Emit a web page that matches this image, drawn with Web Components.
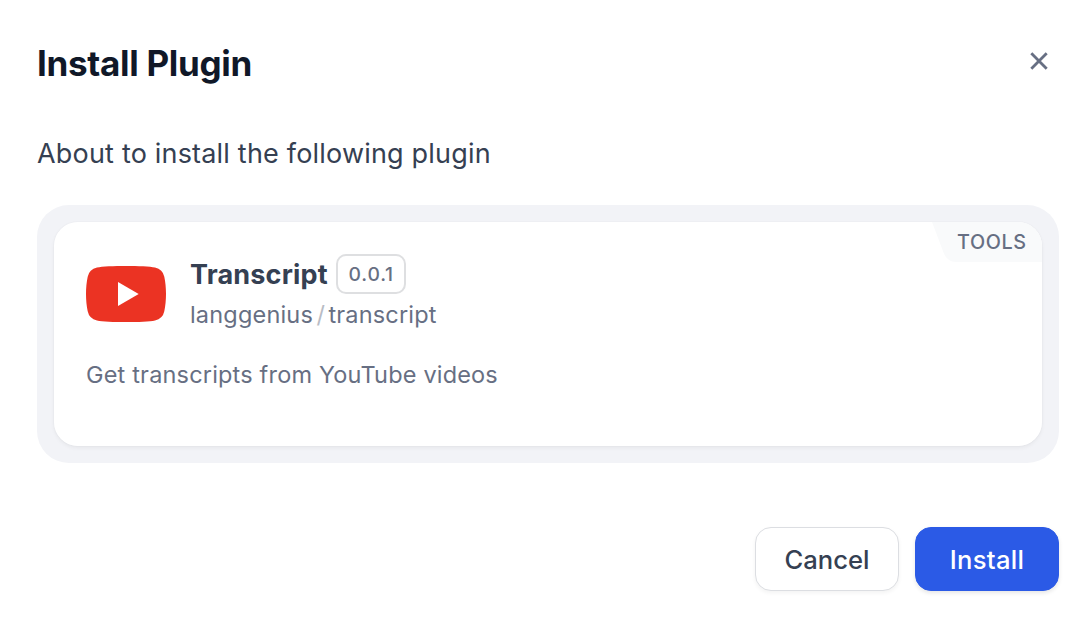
<!DOCTYPE html>
<html lang="en">
<head>
<meta charset="utf-8">
<title>Install Plugin</title>
<style>
html,body{margin:0;height:100%;background:#fff;overflow:hidden}
body{font-family:Inter,"Liberation Sans",sans-serif;color:#354052}
</style>
</head>
<body>
<install-dialog>
  <span slot="title">Install Plugin</span>
  <span slot="message">About to install the following plugin</span>
  <plugin-card>
    <span slot="category">TOOLS</span>
    <youtube-logo slot="icon"></youtube-logo>
    <span slot="name">Transcript</span>
    <version-badge slot="version">0.0.1</version-badge>
    <span slot="org">langgenius</span>
    <span slot="package">transcript</span>
    <span slot="description">Get transcripts from YouTube videos</span>
  </plugin-card>
  <action-button slot="actions">Cancel</action-button>
  <action-button slot="actions" variant="primary">Install</action-button>
</install-dialog>
<script>
function define(name, markup) {
  const template = document.createElement('template');
  template.innerHTML = markup;
  customElements.define(name, class extends HTMLElement {
    constructor() {
      super();
      this.attachShadow({ mode: 'open' }).append(template.content.cloneNode(true));
    }
  });
}

define('close-icon', `
<style>:host{display:block;width:18px;height:18px}svg{display:block}</style>
<svg width="18" height="18" viewBox="0 0 18 18" fill="none" stroke="#676f83" stroke-width="2.8"><path d="M1.3 1.3 16.7 16.7M16.7 1.3 1.3 16.7"/></svg>`);

define('youtube-logo', `
<style>:host{display:block;width:80px;height:80px}svg{display:block}</style>
<svg width="80" height="80" viewBox="0 0 80 80"><path fill="#eb3323" d="M40 12C52 12 64 12.4 69 13.6Q76.8 15.4 78.3 22.8C79.4 28 80 34 80 40S79.4 52 78.3 57.2Q76.8 64.6 69 66.4C64 67.6 52 68 40 68S16 67.6 11 66.4Q3.2 64.6 1.7 57.2C.6 52 0 46 0 40S.6 28 1.7 22.8Q3.2 15.4 11 13.6C16 12.4 28 12 40 12Z"/><path fill="#fff" d="M32 28v24l20.7-12z"/></svg>`);

define('version-badge', `
<style>:host{display:flex;box-sizing:border-box;width:70px;height:40px;border:2px solid #dedfe1;border-radius:10px;align-items:center;justify-content:center;font-size:19.3px;font-weight:500;letter-spacing:.8px;text-indent:.8px;color:#676f83}</style>
<slot></slot>`);

define('action-button', `
<style>
:host{display:block}
button{display:block;box-sizing:border-box;width:144px;height:64px;padding:2px 0 0;border:1px solid #dcdee2;border-radius:16px;background:#fff;color:#354052;font:500 25.6px/60px Inter,sans-serif;box-shadow:0 2px 4px rgba(9,9,11,.05)}
:host([variant=primary]) button{background:#2b5ae6;border-color:#2b5ae6;color:#fff;letter-spacing:.3px;box-shadow:0 2px 4px rgba(9,9,11,.1)}
</style>
<button type="button"><slot></slot></button>`);

define('corner-mark', `
<style>
:host{display:flex;height:40px;color:#676f83}
svg{display:block;flex:none}
div{background:#f9fafb;width:86px;box-sizing:border-box;padding-left:1px;font-size:19.8px;font-weight:550;line-height:40px;letter-spacing:.6px}
</style>
<svg width="24" height="40" viewBox="0 0 24 40"><path fill="#f9fafb" d="M0 0H24V40C18 40 13.5 36 11.5 30.5Z"/></svg>
<div><slot></slot></div>`);

define('plugin-card', `
<style>
:host{display:block;box-sizing:border-box;height:258px;padding:17px;border-radius:32px;background:#f2f3f7}
article{position:relative;box-sizing:border-box;width:988px;height:224px;padding:32px;border-radius:24px;background:#fff;overflow:hidden}
.shadow{border-radius:24px;box-shadow:0 2px 4px rgba(9,9,11,.05),0 0 2px rgba(9,9,11,.05)}
corner-mark{position:absolute;right:0;top:0}
header{display:flex;gap:24px;height:80px}
.titles{display:flex;flex-direction:column}
.row{display:flex;align-items:center;height:40px;gap:8px}
.name{font-size:27px;font-weight:650;line-height:40px;padding-top:1px;letter-spacing:.18px;white-space:nowrap}
.path{display:flex;margin-top:1px;font-size:23.5px;line-height:40px;letter-spacing:.18px;color:#676f83;white-space:nowrap}
.sep{color:#b8bcc5;margin:0 3.4px}
.desc{margin:25px 0 0;font-size:23.5px;line-height:32px;letter-spacing:.18px;color:#676f83;white-space:nowrap}
</style>
<div class="shadow"><article>
<corner-mark><slot name="category"></slot></corner-mark>
<header><slot name="icon"></slot>
<div class="titles"><div class="row"><div class="name"><slot name="name"></slot></div><slot name="version"></slot></div>
<div class="path"><slot name="org"></slot><span class="sep">/</span><slot name="package"></slot></div></div></header>
<p class="desc"><slot name="description"></slot></p>
</article></div>`);

define('install-dialog', `
<style>
:host{display:flex;flex-direction:column;box-sizing:border-box;width:1090px;height:626px;padding:39px 31px 0 37px;background:#fff}
.head{display:flex;justify-content:space-between;height:48px}
h1{margin:0;font-size:35px;font-weight:650;line-height:48px;letter-spacing:-.3px;color:#101828;white-space:nowrap}
button{display:block;border:0;background:none;padding:0;height:18px;margin:13px 11px 0 0}
p{margin:47px 0 0;height:40px;font-size:27px;line-height:40px;letter-spacing:.19px;white-space:nowrap}
.body{margin-top:31px}
footer{display:flex;justify-content:flex-end;gap:16px;margin-top:64px}
</style>
<div class="head"><h1><slot name="title"></slot></h1><button type="button" aria-label="Close"><close-icon></close-icon></button></div>
<p><slot name="message"></slot></p>
<div class="body"><slot></slot></div>
<footer><slot name="actions"></slot></footer>`);
</script>
</body>
</html>
